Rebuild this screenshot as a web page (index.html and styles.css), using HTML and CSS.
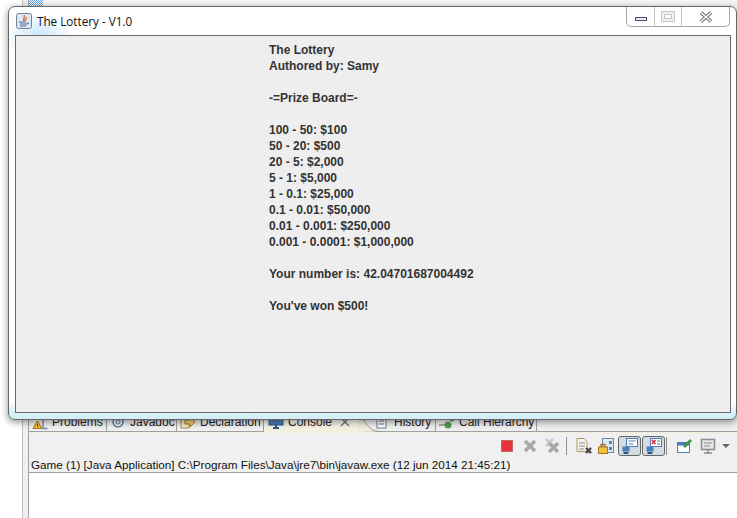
FILE: index.html
```html
<!DOCTYPE html>
<html lang="en">
<head>
    <meta charset="UTF-8">
    <meta name="viewport" content="width=device-width, initial-scale=1.0">
    <link rel="stylesheet" href="styles.css">
    <title>The Lottery - V1.0</title>
</head>
<body>
    <!-- eclipse behind the window -->
    <div class="ide">
        <div class="ide-gutter"></div>
        <div class="ide-main">
            <div class="ide-top"><div class="dither"></div></div>
            <div class="tabs">
                <div class="tab tab-problems">
                    <svg class="tab-icon" viewBox="0 0 16 16"><path d="M1 14.5 L5.5 7 L10 14.5 Z" fill="#f2b632" stroke="#a8741a"/><path d="M5.5 10 V12.5" stroke="#7a4a10"/><path d="M11 4 V14.5 H15.5" fill="none" stroke="#7d8ea6" stroke-width="1.5"/></svg>
                    Problems
                </div>
                <div class="tab tab-javadoc">
                    <svg class="tab-icon" viewBox="0 0 16 16"><circle cx="8" cy="8" r="5" fill="none" stroke="#5f7fa8" stroke-width="1.5"/><circle cx="8" cy="8" r="2" fill="none" stroke="#5f7fa8"/></svg>
                    Javadoc
                </div>
                <div class="tab tab-declaration">
                    <svg class="tab-icon" viewBox="0 0 16 16"><path d="M1 3 H9 V14 H1 Z" fill="#f6edc8" stroke="#a8883a"/><path d="M5 6 H10 V3 L15 8 L10 13 V10 H5 Z" fill="#f4d27a" stroke="#a8741a"/></svg>
                    Declaration
                </div>
                <div class="tab tab-active">
                    <svg class="tab-icon" viewBox="0 0 16 16"><rect x="1" y="2" width="14" height="9" fill="#4a7fb8" stroke="#2b5788"/><path d="M5 14 H11 M8 11 V14" stroke="#2b5788" stroke-width="2"/></svg>
                    Console
                    <svg class="tab-close" viewBox="0 0 10 10"><path d="M1 1 L9 9 M9 1 L1 9" stroke="#777" stroke-width="1.5"/></svg>
                </div>
                <div class="tab tab-history">
                    <svg class="tab-curve" viewBox="0 0 22 20"><path d="M0 0 C8 10 10 19.5 22 19.5 L0 20 Z" fill="#f3eedb"/><path d="M0 0 C8 10 10 19.5 22 19.5" fill="none" stroke="#999"/></svg>
                    <svg class="tab-icon" viewBox="0 0 16 16"><rect x="3" y="4" width="9" height="10" fill="#fff" stroke="#5f7fa8"/><path d="M5 7 H10 M5 10 H10" stroke="#5f7fa8"/><rect x="10" y="2" width="4" height="4" fill="#e3a04a"/></svg>
                    History
                </div>
                <div class="tab tab-calls">
                    <svg class="tab-icon" viewBox="0 0 16 16"><path d="M0 11 H10" stroke="#666"/><circle cx="9" cy="11" r="3.5" fill="#5a9a5a"/><circle cx="13" cy="5" r="2.5" fill="#5a9a5a"/></svg>
                    Call Hierarchy
                </div>
                <div class="tabs-rest"></div>
            </div>
            <div class="toolbar">
                <svg class="tool tool-stop" viewBox="0 0 16 16"><rect x="2.5" y="2.5" width="11" height="11" fill="#e8333c" stroke="#c9666b"/></svg>
                <svg class="tool" viewBox="0 0 16 16"><path d="M3 3 L13 13 M13 3 L3 13" stroke="#a8a8a8" stroke-width="3.5"/></svg>
                <svg class="tool" viewBox="0 0 16 16"><path d="M2 1 L9 8 M9 1 L2 8" stroke="#c8c8c8" stroke-width="2.5"/><path d="M5 5 L14 14 M14 5 L5 14" stroke="#a8a8a8" stroke-width="3.5"/></svg>
                <span class="tool-sep"></span>
                <svg class="tool" viewBox="0 0 16 16"><path d="M1 0.5 H8 L11 3.5 V13.5 H1 Z" fill="#f7f3e2" stroke="#a8986a"/><path d="M3 5 H9 M3 8 H9 M3 11 H8" stroke="#7d8ea6"/><path d="M10 10 L15 15 M15 10 L10 15" stroke="#444" stroke-width="2.4"/></svg>
                <svg class="tool" viewBox="0 0 16 16"><rect x="4.5" y="0.5" width="11" height="14" fill="#dfe9f5" stroke="#6a86a8"/><rect x="11" y="3" width="3" height="3" fill="#5f7fa8"/><rect x="11" y="9" width="3" height="3" fill="#5f7fa8"/><path d="M3 9 V6.5 H7 V9" fill="none" stroke="#a8741a" stroke-width="1.3"/><rect x="0.5" y="9" width="9" height="6.5" fill="#f0c040" stroke="#a8741a"/></svg>
                <span class="tool-on tool-on-first"><svg class="tool" viewBox="0 0 16 16"><rect x="4.5" y="0.5" width="11" height="8" fill="#fff" stroke="#4a7fb8"/><path d="M6.5 3 H13.5 M6.5 6 H11.5" stroke="#4a7fb8"/><rect x="0.5" y="8.5" width="7" height="5" fill="#4a7fb8"/><path d="M1.5 15 H6.5" stroke="#2b5788" stroke-width="2"/></svg></span>
                <span class="tool-on tool-on-next"><svg class="tool" viewBox="0 0 16 16"><rect x="4.5" y="0.5" width="11" height="8" fill="#fff" stroke="#4a7fb8"/><path d="M6 2 L9.5 6 M9.5 2 L6 6" stroke="#d8303a" stroke-width="1.5"/><path d="M11 3 H14 M11 6 H14" stroke="#4a7fb8"/><rect x="0.5" y="8.5" width="7" height="5" fill="#4a7fb8"/><path d="M1.5 15 H6.5" stroke="#2b5788" stroke-width="2"/></svg></span>
                <span class="tool-sep tool-sep-tight"></span>
                <svg class="tool tool-pin" viewBox="0 0 16 16"><rect x="0.5" y="4.5" width="12" height="10" fill="#fff" stroke="#4a7fb8"/><path d="M0 6 H13" stroke="#4a7fb8" stroke-width="3"/><path d="M7 9 L14 2" stroke="#3c9a4a" stroke-width="3"/></svg>
                <svg class="tool" viewBox="0 0 16 16"><rect x="1.5" y="1.5" width="13" height="10" fill="#e8e8e8" stroke="#8a8a8a" stroke-width="1.5"/><path d="M4 5 H12 M4 8 H10" stroke="#8a8a8a"/><path d="M4 15 H12 M8 12 V15" stroke="#8a8a8a" stroke-width="1.5"/></svg>
                <span class="tool-caret"></span>
            </div>
            <div class="status-line">Game (1) [Java Application] C:\Program Files\Java\jre7\bin\javaw.exe (12 jun 2014 21:45:21)</div>
            <div class="console"></div>
        </div>
    </div>

    <!-- the swing window on top -->
    <div class="window">
        <div class="titlebar">
            <svg class="java-icon" viewBox="0 0 16 16">
                <rect x="0.5" y="0.5" width="15" height="15" rx="2" fill="#dfe8f2" stroke="#6f8296"/>
                <path d="M8 2 C10 5 6 5 8 8 M10 4 C11 6 9 6 9 8" fill="none" stroke="#d9662a" stroke-width="1.3"/>
                <path d="M3 9 H10 M4 11 H11 L13 10 M4 13 H10" fill="none" stroke="#46709c" stroke-width="1.1"/>
            </svg>
            <span class="title-text">The Lottery - V1.0</span>
            <div class="win-buttons">
                <span class="win-btn win-min"><span class="min-glyph"></span></span>
                <span class="win-btn win-max"><span class="max-glyph"></span></span>
                <span class="win-btn win-close">
                    <svg class="close-glyph" viewBox="0 0 14 12"><path d="M2 1.5 L12 10.5 M12 1.5 L2 10.5" stroke="#5c6270" stroke-width="3.4"/><path d="M2 1.5 L12 10.5 M12 1.5 L2 10.5" stroke="#fff" stroke-width="1.6"/></svg>
                </span>
            </div>
        </div>
        <div class="client">
            <div class="board">
                <p>The Lottery</p>
                <p>Authored by: Samy</p>
                <p>&nbsp;</p>
                <p>-=Prize Board=-</p>
                <p>&nbsp;</p>
                <p>100 - 50: $100</p>
                <p>50 - 20: $500</p>
                <p>20 - 5: $2,000</p>
                <p>5 - 1: $5,000</p>
                <p>1 - 0.1: $25,000</p>
                <p>0.1 - 0.01: $50,000</p>
                <p>0.01 - 0.001: $250,000</p>
                <p>0.001 - 0.0001: $1,000,000</p>
                <p>&nbsp;</p>
                <p>Your number is: 42.04701687004492</p>
                <p>&nbsp;</p>
                <p>You've won $500!</p>
            </div>
        </div>
    </div>
</body>
</html>
```

FILE: styles.css
```css
html, body {
    margin: 0;
    height: 100%;
    overflow: hidden;
}

body {
    position: relative;
    background-color: white;
    font-family: "Liberation Sans", Arial, sans-serif;
}

.ide {
    display: flex;
    height: 518px;
}

.ide-gutter {
    width: 22px;
    flex: none;
    background-color: white;
    border-right: 1px solid #c0c0c0;
}

.ide-main {
    flex: 1;
    display: flex;
    flex-direction: column;
    min-width: 0;
    padding-left: 5px;
    background-color: #f0f0f0;
}

.ide-top {
    height: 412px;
    border-left: 1px solid #a0a0a0;
    background-color: #f6f6f6;
}

.dither {
    width: 14px;
    height: 7px;
    background: repeating-conic-gradient(#5b9be0 0 25%, #fff 0 50%) 0 0 / 2px 2px;
}

.tabs {
    display: flex;
    height: 20px;
    border-left: 1px solid #a0a0a0;
    font-size: 12px;
    color: #222;
}

.tab {
    display: flex;
    align-items: center;
    gap: 4px;
    box-sizing: border-box;
    padding-left: 3px;
    border-right: 1px solid #a0a0a0;
    border-bottom: 1px solid #a0a0a0;
    white-space: nowrap;
}

.tab-problems {
    width: 78px;
}

.tab-javadoc {
    width: 70px;
}

.tab-declaration {
    width: 87px;
}

.tab-active {
    width: 94px;
    padding-left: 4px;
    background: linear-gradient(#fff, #f3eedb);
    border-right: none;
    border-bottom: none;
}

.tab-history {
    position: relative;
    width: 78px;
    padding-left: 16px;
}

.tab-calls {
    width: 101px;
}

.tab-curve {
    position: absolute;
    left: 0;
    top: 0;
    width: 22px;
    height: 20px;
}

.tab-icon {
    position: relative;
    width: 16px;
    height: 16px;
    flex: none;
}

.tab-close {
    width: 10px;
    height: 10px;
    margin-left: 4px;
}

.tabs-rest {
    flex: 1;
    border-bottom: 1px solid #a0a0a0;
}

.toolbar {
    display: flex;
    align-items: center;
    justify-content: flex-end;
    gap: 6px;
    box-sizing: border-box;
    height: 25px;
    padding: 2px 7px 0 0;
    border-left: 1px solid #a0a0a0;
    border-top: 1px solid #f3eedb;
}

.tool {
    display: block;
    width: 16px;
    height: 16px;
    flex: none;
}

.tool-stop, .tool-pin {
    margin-right: 1px;
}

.tool-sep {
    width: 1px;
    height: 18px;
    margin-right: 3px;
    background-color: #909090;
}

.tool-sep-tight {
    margin-left: -5px;
    margin-right: 4px;
}

.tool-on {
    padding: 1px 2px 1px 3px;
    background-color: #d5dbe2;
    border: 1px solid #666;
    border-radius: 3px;
}

.tool-on-first {
    margin-left: -2px;
}

.tool-on-next {
    margin-left: -5px;
}

.tool-caret {
    width: 0;
    height: 0;
    border-left: 4px solid transparent;
    border-right: 4px solid transparent;
    border-top: 4px solid #666;
}

.status-line {
    height: 15px;
    padding-left: 2px;
    border-left: 1px solid #a0a0a0;
    border-bottom: 1px solid #a0a0a0;
    font-size: 11.7px;
    line-height: 15px;
    color: #111;
    white-space: nowrap;
}

.console {
    flex: 1;
    background-color: white;
    border-left: 1px solid #a0a0a0;
}

.window {
    position: absolute;
    left: 8px;
    top: 6px;
    width: 729px;
    height: 414px;
    box-sizing: border-box;
    display: flex;
    flex-direction: column;
    padding: 0 5px 6px 6px;
    background:
        radial-gradient(ellipse 34px 24px at 30px 30px, #c4e6fa, rgba(196, 230, 250, 0)),
        linear-gradient(to bottom, #fff 0, #fff 96%, #dcf1f9 98%, #d2edf8 100%);
    border: 1px solid #666;
    border-radius: 7px;
    box-shadow: 0 2px 6px 1px rgba(0, 0, 0, 0.35);
}

.titlebar {
    display: flex;
    align-items: center;
    gap: 5px;
    height: 28px;
    flex: none;
    padding-left: 1px;
}

.java-icon {
    width: 16px;
    height: 16px;
    flex: none;
}

.title-text {
    font-family: "Open Sans", "Liberation Sans", sans-serif;
    font-size: 11.7px;
    color: #111;
}

.win-buttons {
    display: flex;
    align-self: flex-start;
    height: 19px;
    margin-left: auto;
    margin-right: 1px;
    border: 1px solid #a8a8a8;
    border-top: none;
    border-radius: 0 0 5px 5px;
}

.win-btn {
    display: flex;
    align-items: center;
    justify-content: center;
    border-right: 1px solid #c4c4c4;
}

.win-min {
    width: 27px;
}

.win-max {
    width: 26px;
}

.win-close {
    width: 47px;
    border-right: none;
}

.min-glyph {
    width: 10px;
    height: 2px;
    margin-top: 5px;
    background-color: #e8ecf4;
    border: 1px solid #4a5070;
}

.max-glyph {
    width: 6px;
    height: 3px;
    border: 1px solid #c4c4c4;
    outline: 2px solid #f0f0f0;
    box-shadow: 0 0 0 3px #c4c4c4;
}

.close-glyph {
    width: 14px;
    height: 12px;
}

.client {
    flex: 1;
    min-height: 0;
    background-color: #eeeeee;
    border: 1px solid #6a6a6a;
}

.board {
    margin-left: 253px;
    padding-top: 6px;
    font-size: 12px;
    font-weight: bold;
    line-height: 16px;
    color: #333;
}

.board p {
    margin: 0;
    white-space: nowrap;
}
```
